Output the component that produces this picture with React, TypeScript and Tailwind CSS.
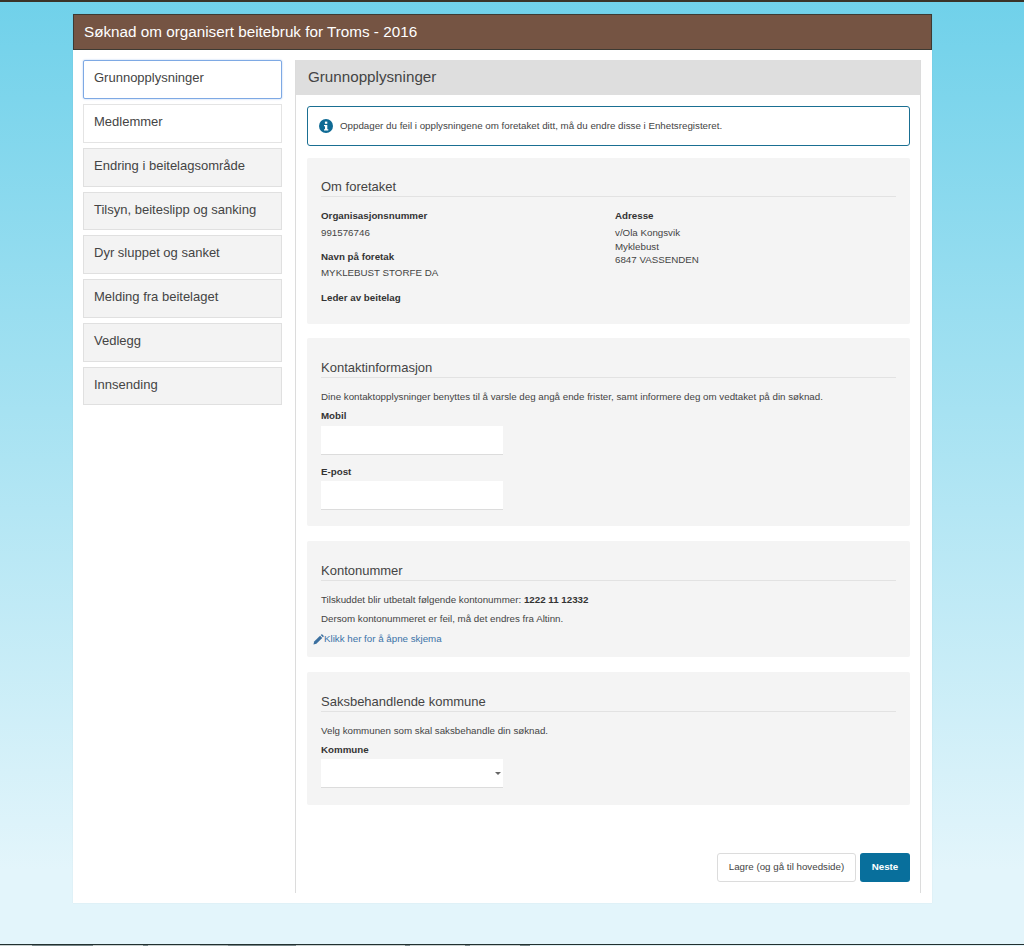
import React from "react";

const steps = [
  { label: "Grunnopplysninger", state: "active" },
  { label: "Medlemmer", state: "open" },
  { label: "Endring i beitelagsområde", state: "" },
  { label: "Tilsyn, beiteslipp og sanking", state: "" },
  { label: "Dyr sluppet og sanket", state: "" },
  { label: "Melding fra beitelaget", state: "" },
  { label: "Vedlegg", state: "" },
  { label: "Innsending", state: "" },
];

// cut off text at the bottom edge of the capture
const edge = [
  [32, "#c9d0d0"], [61, "#79878a"], [50, "#c9d0d0"], [5, "#79878a"], [52, "#c9d0d0"], [28, "#aab4b5"],
  [68, "#79878a"], [54, "#c9d0d0"], [55, "#c9d0d0"], [5, "#79878a"], [55, "#c9d0d0"], [5, "#79878a"],
  [50, "#c9d0d0"], [10, "#79878a"], [480, "#dfeef2"],
] as const;

const SectionTitle = ({ children }: { children: React.ReactNode }) => (
  <h3 className="border-b border-[#e2e2e2] text-[13px] leading-[18px] text-[#444]">{children}</h3>
);

const Field = ({ label, select, inputClass = "mt-[2px]" }: { label: string; select?: boolean; inputClass?: string }) => (
  <div>
    <div className="font-bold text-[9.75px] leading-[14px] text-[#333]">{label}</div>
    <div className={"relative w-[182px] h-[29px] bg-white border-b border-[#dcdcdc] " + inputClass}>
      {select && <span className="absolute right-[2px] top-[13px] border-x-[3px] border-t-[3px] border-x-transparent border-t-[#666]" />}
    </div>
  </div>
);

export default function App() {
  return (
    <div className="h-[946px] overflow-hidden flex flex-col bg-[linear-gradient(180deg,#70d1ea_0%,#e3f5fb_92%)] font-['Liberation_Sans',Arial,sans-serif] text-[9.75px] text-[#444]">
      <div className="h-[2px] bg-[#3a3328]" />
      <div className="flex-1 pt-[12px] pl-[73px]">
        <div className="w-[859px] h-[889px] bg-white shadow-[0_0_1px_rgba(0,0,0,0.1)] flex flex-col">
          <header className="h-[36px] bg-[#755443] border border-[#3d3a33] pl-[10px] flex items-center text-white text-[15.25px]">
            Søknad om organisert beitebruk for Troms - 2016
          </header>
          <div className="flex-1 flex pt-[10px] pl-[10px] pr-[11px] pb-[10px] gap-[13px]">
            <nav className="w-[199px] flex flex-col gap-[5px]">
              {steps.map((s) => (
                <div
                  key={s.label}
                  className={
                    s.state === "active"
                      ? "h-[39px] bg-white border border-[#7ea9e4] rounded-[2px] shadow-[0_0_2px_#a9c6ee] pl-[10px] pt-[8px] text-[13px] leading-[18px] text-[#444]"
                      : s.state === "open"
                        ? "h-[38.75px] bg-white border border-[#e4e4e4] pl-[10px] pt-[8px] text-[13px] leading-[18px] text-[#444]"
                        : "h-[38.75px] bg-[#f3f3f3] border border-[#e0e0e0] pl-[10px] pt-[8px] text-[13px] leading-[18px] text-[#444]"
                  }
                >
                  {s.label}
                </div>
              ))}
            </nav>
            <main className="w-[626px] h-[833px] border-x border-[#dcdcdc] flex flex-col">
              <h2 className="h-[35px] bg-[#dedede] pl-[12px] flex items-center text-[15.2px] text-[#444]">Grunnopplysninger</h2>
              <div className="pl-[11px] pr-[10px] pt-[11px] flex flex-col">
                <div className="h-[40px] border border-[#1a6f92] rounded-[3px] flex items-center pl-[11px] gap-[7px]">
                  <svg width="14" height="14" viewBox="0 0 14 14">
                    <circle cx="7" cy="7" r="7" fill="#0f6a94" />
                    <rect x="5.9" y="2.6" width="2.4" height="2.2" fill="#fff" />
                    <path d="M5 6h3.3v4.2h1v1.2H5v-1.2h1V7.200H5z" fill="#fff" />
                  </svg>
                  <span>Oppdager du feil i opplysningene om foretaket ditt, må du endre disse i Enhetsregisteret.</span>
                </div>

                <section className="mt-[12px] h-[166px] bg-[#f4f4f4] rounded-[2px] pl-[14px] pr-[14px] pt-[20px]">
                  <SectionTitle>Om foretaket</SectionTitle>
                  <div className="flex mt-[12px] leading-[14px]">
                    <div className="w-[294px]">
                      <div className="font-bold text-[#333]">Organisasjonsnummer</div>
                      <div className="mt-[3px]">991576746</div>
                      <div className="font-bold text-[#333] mt-[10px]">Navn på foretak</div>
                      <div className="mt-[2px]">MYKLEBUST STORFE DA</div>
                      <div className="font-bold text-[#333] mt-[11px]">Leder av beitelag</div>
                    </div>
                    <div className="leading-[13.5px]">
                      <div className="font-bold text-[#333] leading-[14px]">Adresse</div>
                      <div className="mt-[3px]">v/Ola Kongsvik</div>
                      <div>Myklebust</div>
                      <div>6847 VASSENDEN</div>
                    </div>
                  </div>
                </section>

                <section className="mt-[14px] h-[188px] bg-[#f4f4f4] rounded-[2px] pl-[14px] pr-[14px] pt-[21px]">
                  <SectionTitle>Kontaktinformasjon</SectionTitle>
                  <p className="mt-[12px] leading-[14px]">Dine kontaktopplysninger benyttes til å varsle deg angå ende frister, samt informere deg om vedtaket på din søknad.</p>
                  <div className="mt-[5px] flex flex-col gap-[10px]">
                    <Field label="Mobil" inputClass="mt-[3px]" />
                    <Field label="E-post" />
                  </div>
                </section>

                <section className="mt-[15px] h-[116px] bg-[#f4f4f4] rounded-[2px] pl-[14px] pr-[14px] pt-[21px]">
                  <SectionTitle>Kontonummer</SectionTitle>
                  <p className="mt-[12px] leading-[14px]">
                    Tilskuddet blir utbetalt følgende kontonummer: <b className="text-[#333]">1222 11 12332</b>
                  </p>
                  <p className="mt-[5px] leading-[14px]">Dersom kontonummeret er feil, må det endres fra Altinn.</p>
                  <a className="-ml-[8px] mt-[6px] flex items-center text-[#3b73a8] leading-[14px]">
                    <svg width="11" height="11" viewBox="0 0 12 12" fill="#3b6f9f">
                      <path d="M0.500 11.500l0.800-3.200 6.400-6.400 2.400 2.400-6.400 6.400z" />
                      <path d="M8.400 1.200l0.700-0.700a0.800 0.800 0 0 1 1.100 0l1.300 1.300a0.800 0.800 0 0 1 0 1.100l-0.700 0.700z" />
                    </svg>
                    Klikk her for å åpne skjema
                  </a>
                </section>

                <section className="mt-[15px] h-[133px] bg-[#f4f4f4] rounded-[2px] pl-[14px] pr-[14px] pt-[21px]">
                  <SectionTitle>Saksbehandlende kommune</SectionTitle>
                  <p className="mt-[12px] leading-[14px]">Velg kommunen som skal saksbehandle din søknad.</p>
                  <div className="mt-[5px]">
                    <Field label="Kommune" select />
                  </div>
                </section>

                <div className="mt-[48px] flex justify-end gap-[4px]">
                  <button className="h-[29px] w-[139px] bg-white border border-[#dcdcdc] rounded-[3px] text-[#444]">Lagre (og gå til hovedside)</button>
                  <button className="h-[29px] w-[50px] bg-[#086f9c] rounded-[3px] text-white font-bold">Neste</button>
                </div>
              </div>
            </main>
          </div>
        </div>
      </div>
      <div className="h-[1px] bg-[#22302f]" />
      <div className="h-[1px] flex">
        {edge.map(([w, c], i) => (
          <span key={i} style={{ width: w, background: c }} />
        ))}
      </div>
    </div>
  );
}
